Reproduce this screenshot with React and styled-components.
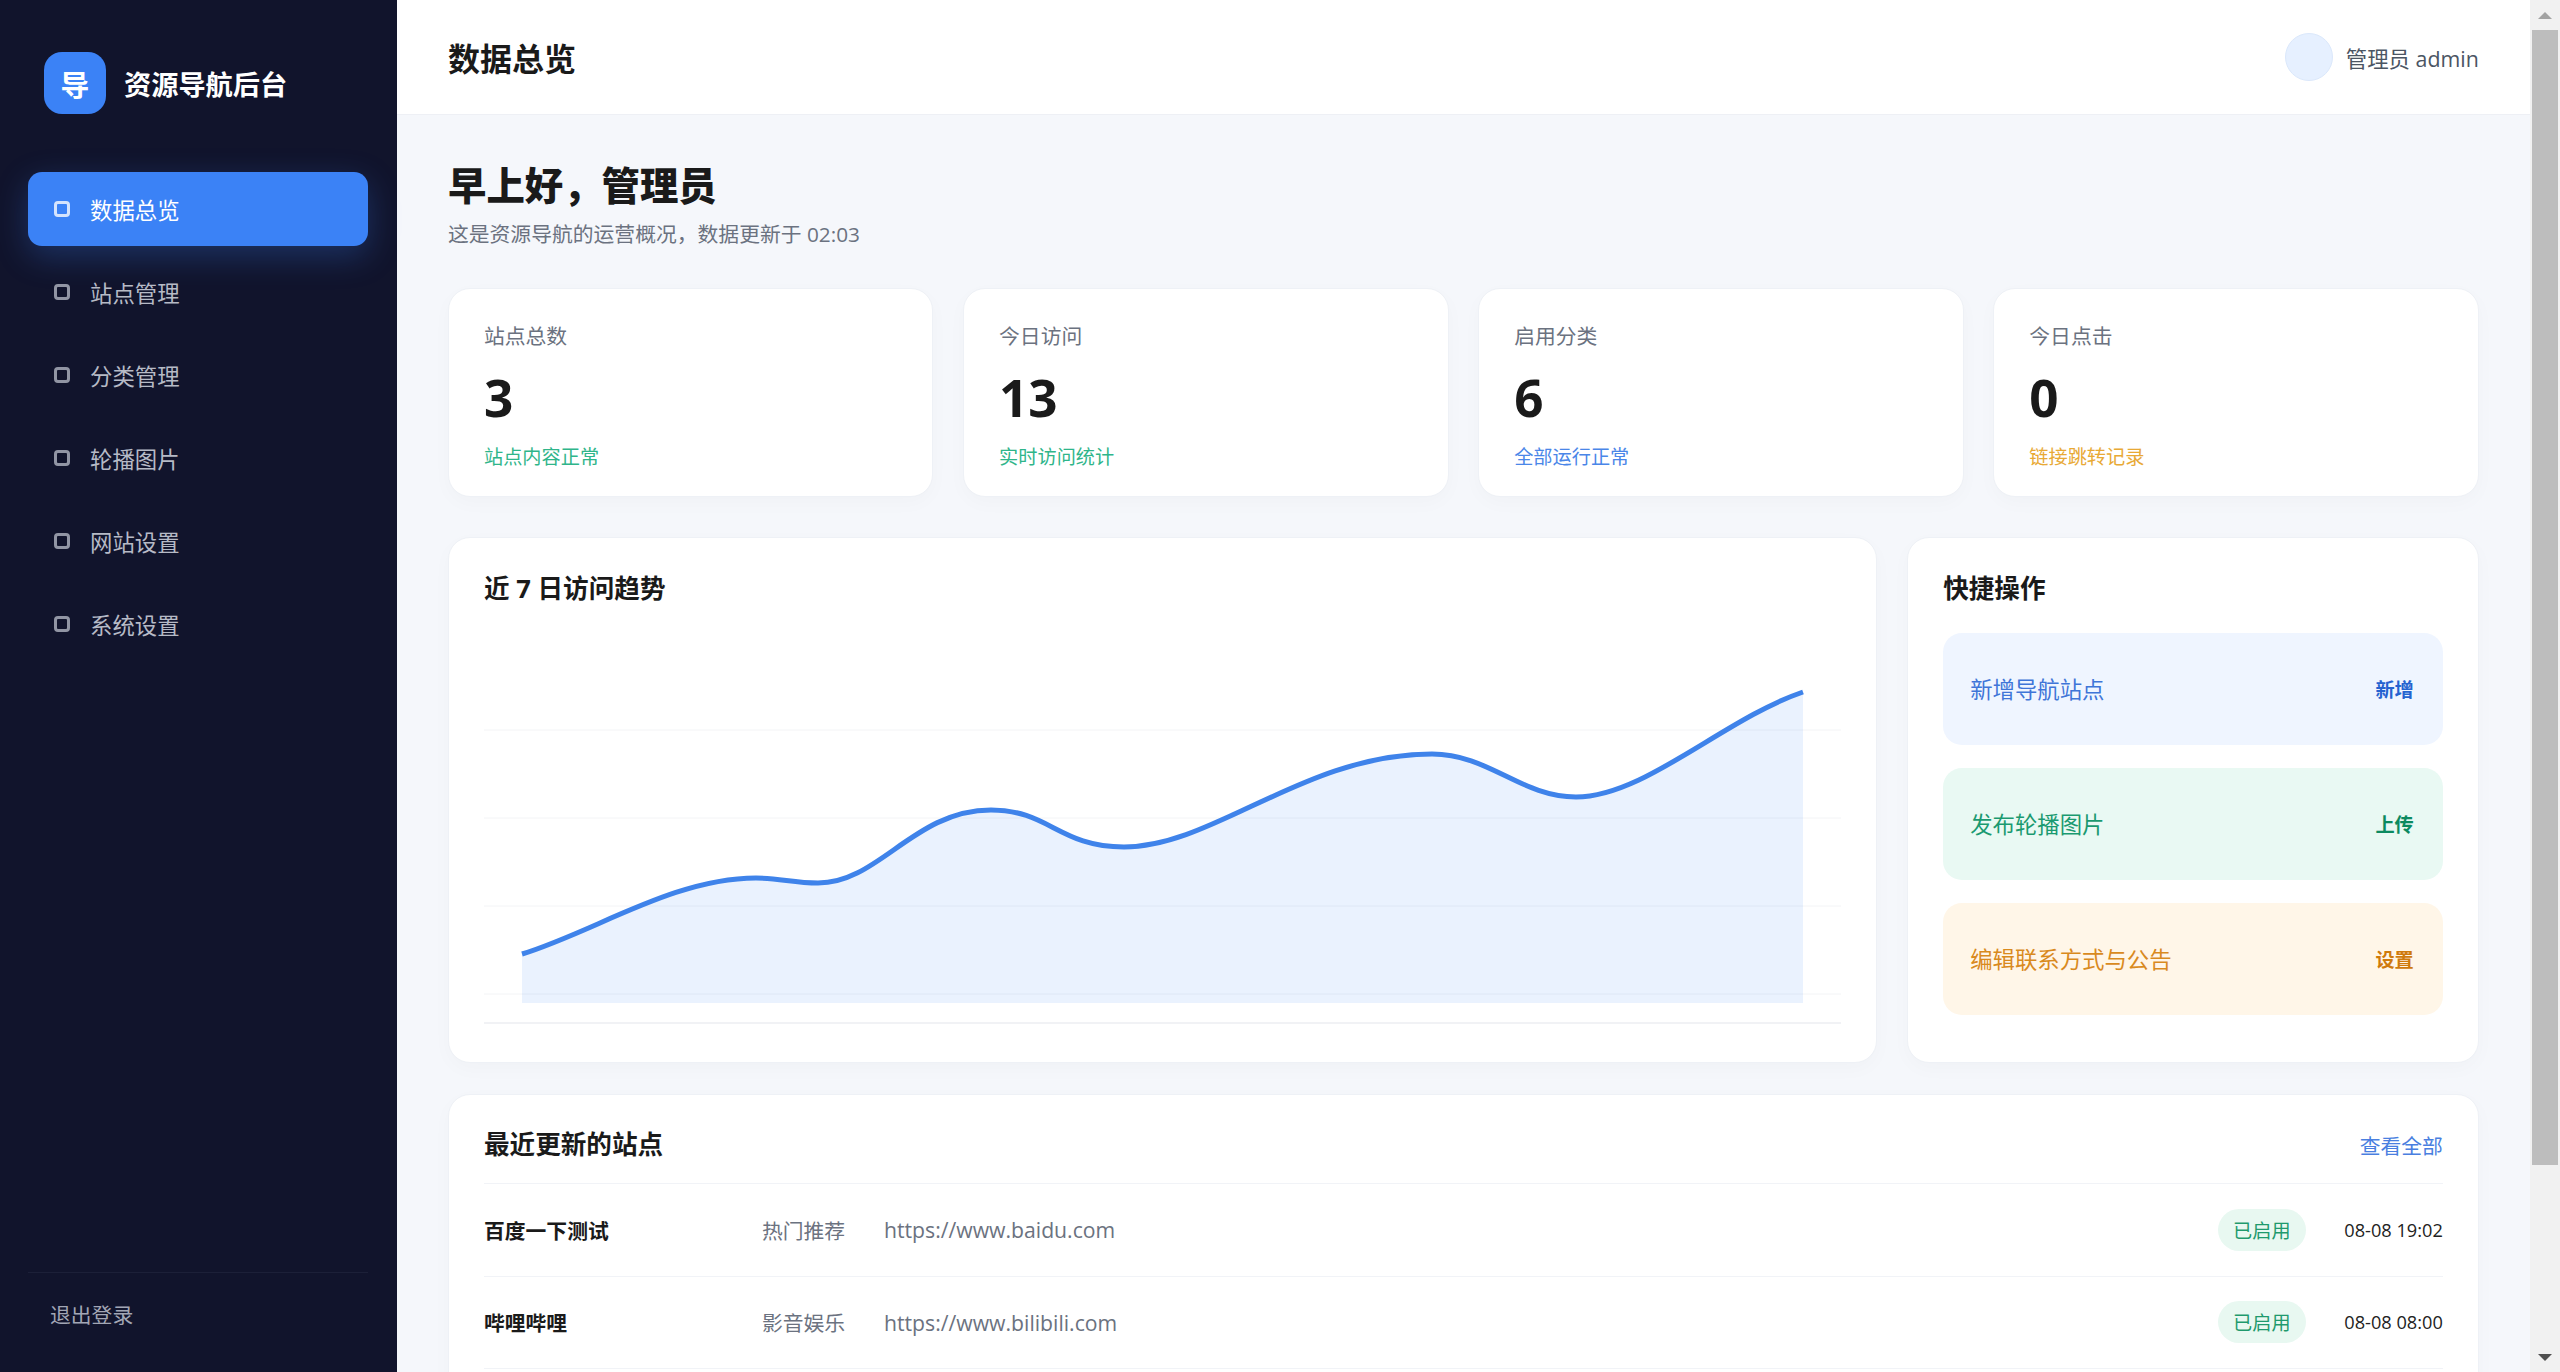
import React from "react";
import styled, { createGlobalStyle } from "styled-components";

const GlobalStyle = createGlobalStyle`
  * {
    box-sizing: border-box;
  }
  html,
  body {
    margin: 0;
    height: 100%;
    overflow: hidden;
  }
  body {
    font-family: "Open Sans", "Noto Sans CJK SC", sans-serif;
    background: #f5f7fb;
    color: #1a1a1a;
  }
`;

const navItems = ["数据总览", "站点管理", "分类管理", "轮播图片", "网站设置", "系统设置"];

const stats = [
  { label: "站点总数", value: "3", note: "站点内容正常", color: "#2fb58a" },
  { label: "今日访问", value: "13", note: "实时访问统计", color: "#2fb58a" },
  { label: "启用分类", value: "6", note: "全部运行正常", color: "#4a86e8" },
  { label: "今日点击", value: "0", note: "链接跳转记录", color: "#e8a935" },
];

const actions = [
  { text: "新增导航站点", tag: "新增", bg: "#eff5ff", color: "#3f75d8", tagColor: "#2563d0" },
  { text: "发布轮播图片", tag: "上传", bg: "#e9f9f3", color: "#1a9a70", tagColor: "#0c8a60" },
  { text: "编辑联系方式与公告", tag: "设置", bg: "#fff6e8", color: "#d98a1e", tagColor: "#cf7a0c" },
];

const sites = [
  { name: "百度一下测试", category: "热门推荐", url: "https://www.baidu.com", time: "08-08 19:02" },
  { name: "哔哩哔哩", category: "影音娱乐", url: "https://www.bilibili.com", time: "08-08 08:00" },
];

// 趋势线，坐标相对图表左上角
const linePath =
  "M38 335 C110 313 190 259 272 259 C295 259 310 264 334 264 C395 264 430 191 507 191 " +
  "C565 191 575 228 640 228 C730 228 820 135 948 135 C1005 135 1037 178 1092 178 " +
  "C1160 178 1240 100 1319 73";
const areaPath = `${linePath} L1319 384 L38 384 Z`;

const TrendChart = () => (
  <ChartSvg viewBox="0 0 1357 420" width="1357" height="420">
    {[111, 199, 287, 375].map((y) => (
      <line key={y} x1="0" x2="1357" y1={y} y2={y} stroke="#f3f4f6" strokeWidth="1" />
    ))}
    <line x1="0" x2="1357" y1="404" y2="404" stroke="#eceef2" strokeWidth="1.5" />
    <path d={areaPath} fill="#3b82f6" fillOpacity="0.105" />
    <path d={linePath} fill="none" stroke="#3f83ea" strokeWidth="5" />
  </ChartSvg>
);

const App = () => {
  return (
    <>
      <GlobalStyle />
      <Page>
        <Sidebar>
          <Brand>
            <BrandLogo>导</BrandLogo>
            <BrandName>资源导航后台</BrandName>
          </Brand>
          <Nav>
            {navItems.map((item, i) => (
              <NavItem key={item} $active={i === 0}>
                <NavDot />
                {item}
              </NavItem>
            ))}
          </Nav>
          <SideFooter>退出登录</SideFooter>
        </Sidebar>

        <Main>
          <TopBar>
            <PageTitle>数据总览</PageTitle>
            <UserBox>
              <Avatar />
              管理员 admin
            </UserBox>
          </TopBar>

          <Content>
            <Greeting>早上好，管理员</Greeting>
            <SubText>这是资源导航的运营概况，数据更新于 02:03</SubText>

            <StatGrid>
              {stats.map((s) => (
                <StatCard key={s.label}>
                  <StatLabel>{s.label}</StatLabel>
                  <StatValue>{s.value}</StatValue>
                  <StatNote $color={s.color}>{s.note}</StatNote>
                </StatCard>
              ))}
            </StatGrid>

            <MiddleRow>
              <ChartCard>
                <CardTitle>近 7 日访问趋势</CardTitle>
                <TrendChart />
              </ChartCard>
              <QuickCard>
                <CardTitle>快捷操作</CardTitle>
                <ActionList>
                  {actions.map((a) => (
                    <ActionItem key={a.tag} $bg={a.bg} $color={a.color}>
                      {a.text}
                      <ActionTag $color={a.tagColor}>{a.tag}</ActionTag>
                    </ActionItem>
                  ))}
                </ActionList>
              </QuickCard>
            </MiddleRow>

            <RecentCard>
              <RecentHead>
                <CardTitle>最近更新的站点</CardTitle>
                <ViewAll>查看全部</ViewAll>
              </RecentHead>
              {sites.map((site) => (
                <SiteRow key={site.name}>
                  <SiteName>{site.name}</SiteName>
                  <SiteMuted>{site.category}</SiteMuted>
                  <SiteUrl>{site.url}</SiteUrl>
                  <Badge>已启用</Badge>
                  <SiteTime>{site.time}</SiteTime>
                </SiteRow>
              ))}
            </RecentCard>
          </Content>
        </Main>

        <ScrollTrack>
          <ScrollButton>
            <ArrowUp />
          </ScrollButton>
          <ScrollThumb />
          <ScrollButton>
            <ArrowDown />
          </ScrollButton>
        </ScrollTrack>
      </Page>
    </>
  );
};
export default App;

const Page = styled.div`
  display: flex;
  height: 1372px;
  overflow: hidden;
`;

const Sidebar = styled.aside`
  flex: 0 0 396.8px;
  display: flex;
  flex-direction: column;
  padding: 52px 29px 0 28px;
  background: #11142c;
`;

const Brand = styled.div`
  display: flex;
  align-items: center;
  gap: 18px;
  padding-left: 16px;
  margin-bottom: 58px;
`;

const BrandLogo = styled.div`
  width: 62px;
  height: 62px;
  display: flex;
  align-items: center;
  justify-content: center;
  border-radius: 18px;
  background: #3b82f6;
  color: #fff;
  font-size: 28.8px;
  font-weight: 700;
`;

const BrandName = styled.div`
  color: #fff;
  font-size: 27.2px;
  font-weight: 700;
`;

const Nav = styled.nav`
  flex: 1;
  display: flex;
  flex-direction: column;
  gap: 9px;
`;

const NavItem = styled.div`
  height: 74px;
  display: flex;
  align-items: center;
  gap: 20px;
  padding-left: 26px;
  border-radius: 14px;
  font-size: 22.4px;
  color: ${(p) => (p.$active ? "#fff" : "#b6bac6")};
  background: ${(p) => (p.$active ? "#3b82f6" : "transparent")};
  box-shadow: ${(p) => (p.$active ? "0 10px 32px rgba(59, 130, 246, 0.28)" : "none")};
`;

const NavDot = styled.span`
  width: 16px;
  height: 16px;
  border: 3px solid currentColor;
  border-radius: 4px;
  opacity: 0.78;
`;

const SideFooter = styled.div`
  height: 100px;
  padding: 26px 0 0 22px;
  border-top: 1px solid #1c2038;
  font-size: 20.8px;
  color: #a2a6b5;
`;

const Main = styled.main`
  flex: 1;
  min-width: 0;
  display: flex;
  flex-direction: column;
`;

const TopBar = styled.header`
  flex: 0 0 115px;
  display: flex;
  align-items: center;
  justify-content: space-between;
  padding: 0 51.2px;
  background: #fff;
  border-bottom: 1px solid #eef0f5;
`;

const PageTitle = styled.h1`
  margin: 0;
  font-size: 32px;
  font-weight: 700;
  color: #1a1a1a;
`;

const UserBox = styled.div`
  display: flex;
  align-items: center;
  gap: 13px;
  font-size: 21.4px;
  color: #4b5563;
`;

const Avatar = styled.span`
  width: 48px;
  height: 48px;
  border-radius: 50%;
  border: 1px solid #dbe8fb;
  background: #e6f0ff;
`;

const Content = styled.div`
  padding: 47px 51.2px 0;
`;

const Greeting = styled.h2`
  margin: 0;
  font-size: 38.4px;
  line-height: 46px;
  font-weight: 800;
  color: #1a1a1a;
`;

const SubText = styled.p`
  margin: 10px 0 0;
  font-size: 20.8px;
  line-height: 32px;
  color: #6b7280;
`;

const StatGrid = styled.section`
  display: grid;
  grid-template-columns: repeat(4, 1fr);
  gap: 29.6px;
  margin-top: 38px;
`;

const Card = styled.div`
  background: #fff;
  border: 1px solid #eef1f6;
  border-radius: 22px;
  box-shadow: 0 6px 20px rgba(17, 24, 39, 0.025);
`;

const StatCard = styled(Card)`
  height: 209px;
  padding: 32px 35px 0;
`;

const StatLabel = styled.div`
  font-size: 20.8px;
  line-height: 30px;
  color: #6b7280;
`;

const StatValue = styled.div`
  margin-top: 15.5px;
  font-size: 51.2px;
  line-height: 60px;
  font-weight: 700;
  color: #1a1a1a;
`;

const StatNote = styled.div`
  margin-top: 16px;
  font-size: 19.2px;
  line-height: 28px;
  color: ${(p) => p.$color};
`;

const MiddleRow = styled.section`
  display: grid;
  grid-template-columns: 2.5fr 1fr;
  gap: 30px;
  margin-top: 40px;
`;

const ChartCard = styled(Card)`
  height: 526px;
  padding: 33px 35px 0;
`;

const CardTitle = styled.h3`
  margin: 0;
  font-size: 25.6px;
  line-height: 36px;
  font-weight: 700;
  color: #1a1a1a;
`;

const ChartSvg = styled.svg`
  display: block;
  margin-top: 12px;
`;

const QuickCard = styled(Card)`
  height: 526px;
  padding: 33px 35px 0;
`;

const ActionList = styled.div`
  display: flex;
  flex-direction: column;
  gap: 23px;
  margin-top: 25.5px;
`;

const ActionItem = styled.div`
  height: 112px;
  display: flex;
  align-items: center;
  justify-content: space-between;
  padding: 0 29px 0 27px;
  border-radius: 19px;
  font-size: 22.4px;
  background: ${(p) => p.$bg};
  color: ${(p) => p.$color};
`;

const ActionTag = styled.span`
  font-size: 19.2px;
  font-weight: 700;
  color: ${(p) => p.$color};
`;

const RecentCard = styled(Card)`
  margin-top: 31px;
  padding: 32px 35px;
`;

const RecentHead = styled.div`
  display: flex;
  align-items: center;
  justify-content: space-between;
  padding-bottom: 20px;
  border-bottom: 1px solid #f1f3f7;
`;

const ViewAll = styled.a`
  font-size: 20.8px;
  color: #4a7fe0;
`;

const SiteRow = styled.div`
  height: 92.5px;
  display: grid;
  grid-template-columns: 278px 122px 1fr 88px 137px;
  align-items: center;
  border-bottom: 1px solid #f1f3f7;
`;

const SiteName = styled.div`
  font-size: 20.8px;
  font-weight: 700;
  color: #1a1a1a;
`;

const SiteMuted = styled.div`
  font-size: 20.8px;
  color: #6b7280;
`;

const SiteUrl = styled.div`
  font-size: 21.2px;
  color: #6b7280;
`;

const Badge = styled.span`
  height: 42px;
  display: flex;
  align-items: center;
  justify-content: center;
  border-radius: 21px;
  background: #e8f8f1;
  color: #1f9a6d;
  font-size: 19.2px;
`;

const SiteTime = styled.div`
  text-align: right;
  font-size: 18.2px;
  color: #222;
`;

const ScrollTrack = styled.div`
  flex: 0 0 30px;
  display: flex;
  flex-direction: column;
  background: #f1f1f1;
`;

const ScrollButton = styled.div`
  flex: 0 0 30px;
  display: flex;
  align-items: center;
  justify-content: center;
  &:last-child {
    margin-top: auto;
  }
`;

const ScrollThumb = styled.div`
  height: 1135px;
  margin: 0 2px;
  background: #bdbdbd;
`;

const ArrowUp = styled.span`
  width: 0;
  height: 0;
  border-left: 7px solid transparent;
  border-right: 7px solid transparent;
  border-bottom: 7px solid #a3a3a3;
`;

const ArrowDown = styled.span`
  width: 0;
  height: 0;
  border-left: 7px solid transparent;
  border-right: 7px solid transparent;
  border-top: 7px solid #505050;
`;
